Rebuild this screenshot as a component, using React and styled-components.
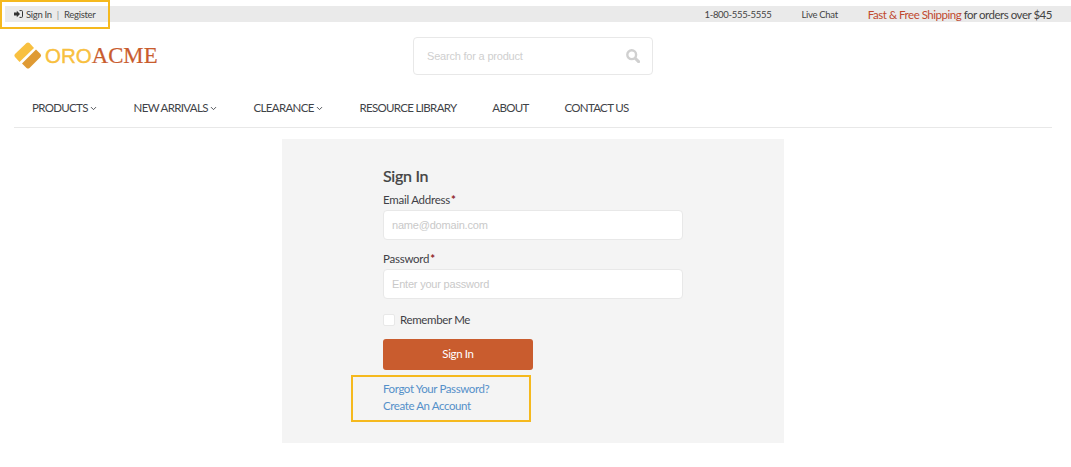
import React from "react";
import styled, { createGlobalStyle } from "styled-components";
import { ChevronDown } from "lucide-react";

const Global = createGlobalStyle`
  html, body { margin: 0; padding: 0; background: #fff; }
  body { font-family: Lato, "Liberation Sans", sans-serif; color: #444; }
  * { box-sizing: border-box; }
  input::placeholder { color: #c9c9c9; opacity: 1; }
`;

const Page = styled.div`
  position: relative;
  width: 1071px;
  height: 467px;
  overflow: hidden;
  padding-top: 6px;
`;

const TopBar = styled.div`
  margin-left: 5px;
  height: 16px;
  background: #eaeaea;
  display: flex;
  align-items: center;
  justify-content: space-between;
  padding: 0 19px 0 9px;
  font-size: 9.5px;
  letter-spacing: -0.3px;
  color: #444;
`;

const TopGroup = styled.div`
  display: flex;
  align-items: center;
  gap: ${(p) => p.$gap || 0}px;
`;

const Sep = styled.span`
  margin: 0 5px;
  color: #8a8f94;
`;

const Promo = styled.span`
  font-size: 11.5px;
  letter-spacing: -0.48px;
  color: #444;
  em { font-style: normal; color: #c0492f; }
`;

const Header = styled.header`
  height: 68px;
  margin: 0 0 0 14px;
  display: grid;
  grid-template-columns: 399px 240px;
  align-items: center;
`;

const Logo = styled.div`
  display: flex;
  align-items: center;
  gap: 3px;
  font-family: "Liberation Serif", serif;
  font-size: 22.8px;
  line-height: 28px;
`;

const LogoA = styled.span`
  color: #f8c040;
  font-family: "Liberation Sans", sans-serif;
  font-size: 20.5px;
  -webkit-text-stroke: 0.4px #f8c040;
`;
const LogoB = styled.span`
  color: #c95c2e;
  margin-left: -3px;
  -webkit-text-stroke: 0.2px #c95c2e;
`;

const Search = styled.div`
  width: 240px;
  height: 38px;
  border: 1px solid #e8e8e8;
  border-radius: 4px;
  display: flex;
  align-items: center;
  justify-content: space-between;
  padding: 0 12px 0 13px;
  font-family: "Liberation Sans", Arial, sans-serif;
  font-size: 11px;
  letter-spacing: -0.2px;
  color: #cfcfcf;
`;

const Nav = styled.nav`
  margin: 0 19px 0 14px;
  height: 38px;
  border-bottom: 1px solid #e8e8e8;
  display: flex;
  align-items: flex-start;
  padding: 10px 0 0 18px;
  gap: 35.8px;
  font-size: 11.5px;
  letter-spacing: -0.67px;
  line-height: 16px;
  color: #3f4348;
`;

const NavItem = styled.span`
  display: inline-flex;
  align-items: center;
  gap: 1px;
  white-space: nowrap;
`;

const Panel = styled.main`
  width: 502px;
  height: 304px;
  margin: 11px 0 0 282px;
  background: #f4f4f4;
  padding: 27px 0 0 101px;
`;

const Form = styled.form`
  width: 300px;
`;

const Title = styled.h1`
  margin: 0;
  font-size: 16px;
  line-height: 20px;
  font-weight: 500;
  letter-spacing: -0.3px;
  color: #444;
  -webkit-text-stroke: 0.2px #444;
`;

const Label = styled.label`
  display: block;
  font-size: 11.5px;
  letter-spacing: -0.25px;
  line-height: 16px;
  color: #3f3f46;
  margin-top: ${(p) => p.$top || 0}px;
  margin-bottom: 2px;
  b { color: #8f1f2a; font-weight: 700; margin-left: 1px; }
`;

const Field = styled.input`
  display: block;
  width: 300px;
  height: 30px;
  border: 1px solid #e8e8e8;
  border-radius: 4px;
  background: #fff;
  padding: 0 8px;
  font-family: "Liberation Sans", Arial, sans-serif;
  font-size: 11px;
  letter-spacing: -0.2px;
`;

const Remember = styled.div`
  display: flex;
  align-items: center;
  gap: 5px;
  margin-top: 13px;
  font-size: 11.5px;
  letter-spacing: -0.35px;
  line-height: 16px;
  color: #3f3f46;
`;

const Box = styled.span`
  width: 12px;
  height: 12px;
  background: #fff;
  border: 1px solid #e8e8e8;
  border-radius: 2px;
`;

const Submit = styled.button`
  display: block;
  width: 150px;
  height: 31px;
  margin-top: 11px;
  padding: 0 0 2px;
  border: 0;
  border-radius: 3px;
  background: #c95c2e;
  color: #fff;
  font-family: Lato, sans-serif;
  font-size: 11.5px;
  letter-spacing: -0.35px;
`;

const Links = styled.div`
  margin-top: 10px;
  display: flex;
  flex-direction: column;
  font-size: 11.5px;
  letter-spacing: -0.4px;
  line-height: 17px;
  color: #5490c9;
`;

const Highlight = styled.div`
  position: absolute;
  border: 2px solid #f5b91e;
  left: ${(p) => p.$x}px;
  top: ${(p) => p.$y}px;
  width: ${(p) => p.$w}px;
  height: ${(p) => p.$h}px;
`;

const Mark = () => (
  <svg width="28" height="28" viewBox="0 0 28 28" aria-hidden="true">
    <path d="M12.5 1 L1 12 Q-0.2 13.5 1 15 L5.5 20 L20 6 L15.5 1 Q14 -0.2 12.5 1Z" fill="#f8c040" />
    <path d="M22 7.5 L8 21.5 L12.5 26 Q14 27.2 15.5 26 L26.5 15 Q27.7 13.5 26.5 12Z" fill="#df9a33" />
  </svg>
);

const SignInIcon = () => (
  <svg width="9" height="8" viewBox="0 0 9 8" aria-hidden="true" style={{ marginRight: 3 }}>
    <path d="M0 2.6H2.8V0.8L6 4 2.8 7.2V5.4H0Z" fill="#333" />
    <path d="M5.5 0.6H7.6Q8.5 0.6 8.5 1.5V6.5Q8.5 7.4 7.6 7.4H5.5" fill="none" stroke="#333" strokeWidth="1" />
  </svg>
);

const SearchIcon = () => (
  <svg width="14" height="14" viewBox="0 0 14 14" aria-hidden="true">
    <circle cx="5.7" cy="5.7" r="4.4" fill="none" stroke="#d0d0d0" strokeWidth="2.4" />
    <path d="M9.2 9.2 L12.6 12.6" stroke="#d0d0d0" strokeWidth="3" strokeLinecap="round" />
  </svg>
);

const Chevron = () => <ChevronDown size={9} strokeWidth={2.4} />;

export default function App() {
  return (
    <Page>
      <Global />
      <TopBar>
        <TopGroup>
          <SignInIcon />
          Sign In<Sep>|</Sep>Register
        </TopGroup>
        <TopGroup $gap={30}>
          <span>1-800-555-5555</span>
          <span>Live Chat</span>
          <Promo><em>Fast &amp; Free Shipping</em> for orders over $45</Promo>
        </TopGroup>
      </TopBar>
      <Header>
        <Logo>
          <Mark />
          <LogoA>ORO</LogoA>
          <LogoB>ACME</LogoB>
        </Logo>
        <Search>
          Search for a product
          <SearchIcon />
        </Search>
      </Header>
      <Nav>
        <NavItem>PRODUCTS<Chevron /></NavItem>
        <NavItem>NEW ARRIVALS<Chevron /></NavItem>
        <NavItem>CLEARANCE<Chevron /></NavItem>
        <NavItem>RESOURCE LIBRARY</NavItem>
        <NavItem>ABOUT</NavItem>
        <NavItem>CONTACT US</NavItem>
      </Nav>
      <Panel>
        <Form>
          <Title>Sign In</Title>
          <Label $top={6}>Email Address<b>*</b></Label>
          <Field placeholder="name@domain.com" />
          <Label $top={11}>Password<b>*</b></Label>
          <Field placeholder="Enter your password" />
          <Remember><Box />Remember Me</Remember>
          <Submit type="button">Sign In</Submit>
          <Links>
            <span>Forgot Your Password?</span>
            <span>Create An Account</span>
          </Links>
        </Form>
      </Panel>
      <Highlight $x={0} $y={0} $w={110} $h={29} />
      <Highlight $x={351} $y={375} $w={180} $h={47} />
    </Page>
  );
}
